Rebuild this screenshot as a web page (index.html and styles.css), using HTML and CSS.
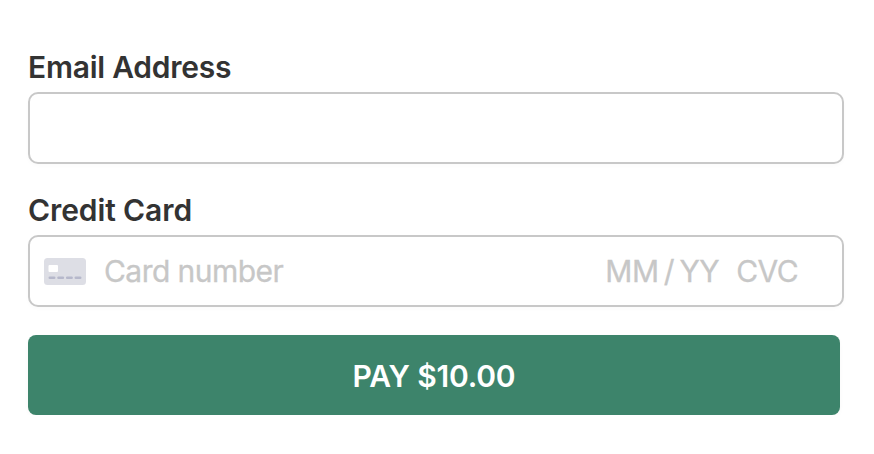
FILE: index.html
```html
<!DOCTYPE html>
<html lang="en">
  <head>
    <meta charset="UTF-8" />
    <meta name="viewport" content="width=device-width, initial-scale=1.0" />
    <title>Payment</title>
    <link rel="stylesheet" href="styles.css">
  </head>

  <body>
    <form class="payment-form">
      <label class="label email-label" for="email">Email Address</label>
      <input class="field" id="email" type="email" />
      <div class="label card-label">Credit Card</div>
      <div class="field card-field">
        <svg class="card-icon" width="42" height="28" viewBox="0 0 42 28">
          <rect y="1" width="42" height="27" rx="3.5" fill="#dddee5" />
          <rect x="4.5" y="8" width="9.5" height="7" rx="1" fill="#fff" />
          <path d="M5.8 20.8h4.4M14.5 20.8h4.4M23.2 20.8h4.4M31.8 20.8h4.4" stroke="#b6b8cb" stroke-width="2.6" stroke-linecap="round" />
        </svg>
        <span class="number">Card number</span>
        <span class="expiry">MM / YY</span>
        <span class="cvc">CVC</span>
      </div>
      <button class="pay-button" type="button">PAY $10.00</button>
    </form>
  </body>
</html>
```
FILE: styles.css
```css
body {
  margin: 0;
  background-color: #fff;
  font-family: Inter, sans-serif;
}
.payment-form {
  display: flex;
  flex-direction: column;
  padding: 49px 30px 0 28px;
}
.label {
  color: #333;
  font-size: 30px;
  font-weight: 600;
  letter-spacing: -0.25px;
  line-height: 36px;
}
.field {
  box-sizing: border-box;
  width: 816px;
  height: 72px;
  margin: 7px 0 0;
  border: 2px solid #c8c8c8;
  border-radius: 10px;
  background-color: #fff;
  box-shadow: 0 2px 4px rgba(0, 0, 0, 0.02);
}
.card-label {
  margin-top: 28px;
  letter-spacing: -0.1px;
}
.card-field {
  display: flex;
  align-items: center;
  padding: 0 44px 0 14px;
  color: #c7c7c7;
  font-size: 30px;
  letter-spacing: -0.55px;
  -webkit-text-stroke: 0.3px #c7c7c7;
}
.number {
  flex-grow: 1;
  margin-left: 18px;
}
.expiry {
  word-spacing: -2.5px;
}
.cvc {
  margin-left: 17px;
}
.pay-button {
  width: 812px;
  height: 80px;
  margin-top: 28px;
  padding: 1px 0 0;
  border: none;
  border-radius: 8px;
  background-color: #3d846b;
  box-shadow: 0 2px 4px rgba(0, 0, 0, 0.03);
  color: #fff;
  font-family: inherit;
  font-size: 30px;
  font-weight: 600;
  letter-spacing: -0.2px;
}
```
